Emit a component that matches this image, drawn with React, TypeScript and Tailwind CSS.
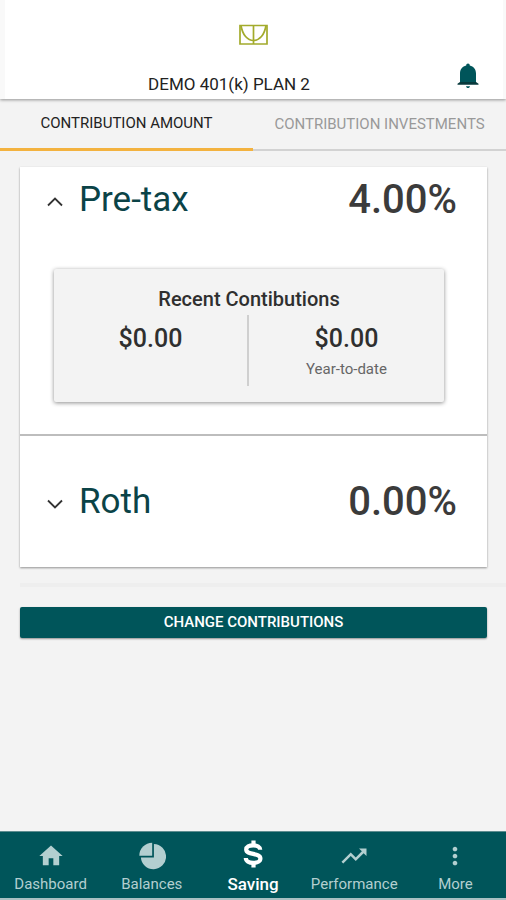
import { useState } from "react";
import type { ReactNode } from "react";
import { MdHome, MdMoreVert, MdTrendingUp } from "react-icons/md";

interface ContributionProps {
  label: string;
  rate: string;
  open?: boolean;
  className: string;
  children?: ReactNode;
}

interface NavItemProps {
  label: string;
  icon: ReactNode;
  active?: boolean;
}

function PlanLogo() {
  return (
    <svg
      className="h-[22px] w-[30px]"
      viewBox="0 0 30 22"
      fill="none"
      stroke="#a3ab2c"
      strokeWidth="1.7"
    >
      <path d="M1 1.5h27v18.5H1zM14.500 1.5V20" />
      <path d="M2 1.5C3.500 11 8.500 16.5 14.500 16.5S25.500 11 27 1.5" />
    </svg>
  );
}

function BellIcon() {
  return (
    <svg className="h-[26px] w-[22px]" viewBox="0 0 22 26" fill="#00555a">
      <path d="M11 0.5c1.1 0 1.8 0.8 1.8 1.9 3.7 0.9 6.2 3.8 6.2 8V20H3V10.4c0-4.2 2.5-7.1 6.2-8 0-1.1.7-1.9 1.8-1.9z" />
      <path d="M3 19h16l2.5 1.7v1H.5v-1z" fill="#07393c" />
      <path d="M9 23.2h4c-.2 1.2-1 1.8-2 1.8s-1.8-.6-2-1.8z" />
    </svg>
  );
}

function ChevronIcon({ open }: { open: boolean }) {
  return (
    <svg
      className="mt-1 h-[10px] w-4"
      viewBox="0 0 16 10"
      fill="none"
      stroke="#333"
      strokeWidth="1.8"
    >
      <path d={open ? "M1 8.5l7-7 7 7" : "M1 1.5l7 7 7-7"} />
    </svg>
  );
}

function PieIcon() {
  return (
    <svg className="h-7 w-7" viewBox="0 0 28 28" fill="currentColor">
      <path d="M15.900 2A12.600 12.600 0 1 1 2.900 15.400H15.900z" />
      <path d="M14.200 .8v12.900H1.300A12.900 12.900 0 0 1 14.200 .8z" />
    </svg>
  );
}

function DollarIcon() {
  return (
    <svg
      className="mb-1 h-7 w-5"
      viewBox="0 0 20 28"
      fill="none"
      stroke="currentColor"
      strokeWidth="4.2"
    >
      <path d="M17.200 9.800C17.200 7 14.200 5.300 10.200 5.300S3.200 6.900 3.200 9.500c0 6 14.200 2.800 14.200 9 0 2.900-3.200 4.400-7.200 4.400s-7.400-1.800-7.400-4.800" />
      <path d="M10.500 .5v4.500M10.500 23v4.500" />
    </svg>
  );
}

function Contribution({
  label,
  rate,
  open = false,
  className,
  children,
}: ContributionProps) {
  return (
    <section className={className}>
      <button
        aria-expanded={open}
        className="flex w-full items-center pr-[30px] pl-[27px]"
      >
        <ChevronIcon open={open} />
        <span className="ml-4 text-[35px] leading-[48px] text-[#0b4347]">
          {label}
        </span>
        <span className="ml-auto text-[40px] leading-[48px] font-medium text-[#3b3b3b]">
          {rate}
        </span>
      </button>
      {children}
    </section>
  );
}

function NavItem({ label, icon, active = false }: NavItemProps) {
  return (
    <a
      href="#"
      aria-current={active ? "page" : undefined}
      className={
        active
          ? "flex flex-1 flex-col items-center text-[17px] font-medium text-white"
          : "flex flex-1 flex-col items-center text-[15px] text-[#b3cfd0]"
      }
    >
      <span className="flex h-7 items-center">{icon}</span>
      <span className="mt-1 leading-5">{label}</span>
    </a>
  );
}

export default function App() {
  const [tab, setTab] = useState("amount");

  const tabs = [
    { id: "amount", label: "CONTRIBUTION AMOUNT" },
    { id: "investments", label: "CONTRIBUTION INVESTMENTS" },
  ];

  return (
    <div className="flex min-h-screen flex-col bg-[#f3f3f3] font-[Roboto,sans-serif] text-[#2f2f2f]">
      <header className="relative bg-[#f9f9f9] pr-[3px] pl-[5px] shadow-[0_1px_3px_rgba(0,0,0,0.4)]">
        <div className="flex flex-col items-center bg-white pt-6 pb-[5px]">
          <PlanLogo />
          <div className="mt-4 grid w-full grid-cols-[1fr_auto_1fr] items-center">
            <h1 className="col-start-2 pt-3 pr-[50px] text-[17px] leading-5 text-[#222]">
              DEMO 401(k) PLAN 2
            </h1>
            <button
              aria-label="Notifications"
              className="mr-6 mb-1 justify-self-end"
            >
              <BellIcon />
            </button>
          </div>
        </div>
      </header>

      <div role="tablist" className="flex h-[52px]">
        {tabs.map((t) => (
          <button
            key={t.id}
            role="tab"
            aria-selected={tab === t.id}
            onClick={() => setTab(t.id)}
            className={
              tab === t.id
                ? "flex-1 border-b-3 border-[#f3b23f] text-[15px] whitespace-nowrap text-[#222]"
                : "flex-1 border-b-2 border-[#d2d2d2] text-[15px] whitespace-nowrap text-[#999]"
            }
          >
            {t.label}
          </button>
        ))}
      </div>

      <main className="flex-1 pt-4 pb-6 pl-5">
        <div className="mr-[19px] bg-white shadow-[0_1px_2px_rgba(0,0,0,0.4)]">
          <Contribution
            label="Pre-tax"
            rate="4.00%"
            open
            className="border-b-2 border-[#bdbdbd] pt-[9px] pb-8"
          >
            <div className="mt-[45px] mr-[43px] ml-[34px] rounded-xs bg-[#f3f3f3] pt-5 pb-4 shadow-[0_1px_4px_rgba(0,0,0,0.45)]">
              <h2 className="text-center text-xl leading-5 font-medium">
                Recent Contibutions
              </h2>
              <div className="mt-[6px] grid grid-cols-2 text-center">
                <div className="h-[71px] border-r-2 border-[#cfcfcf] pt-2">
                  <p className="text-[25px] leading-8 font-medium">$0.00</p>
                </div>
                <div className="pt-2">
                  <p className="text-[25px] leading-8 font-medium">$0.00</p>
                  <p className="mt-1 text-[15px] leading-5 text-[#666]">
                    Year-to-date
                  </p>
                </div>
              </div>
            </div>
          </Contribution>
          <Contribution
            label="Roth"
            rate="0.00%"
            className="pt-[42px] pb-[41px]"
          />
        </div>

        <hr className="mt-4 border-t-4 border-[#eeeeee]" />

        <div className="mt-5 mr-[19px]">
          <button className="h-[31px] w-full rounded-xs bg-[#00555a] text-[15px] font-medium text-white shadow-[0_1px_2px_rgba(0,0,0,0.4)]">
            CHANGE CONTRIBUTIONS
          </button>
        </div>
      </main>

      <nav className="flex border-t border-b-2 border-t-[#5e8c8f] border-b-[#a9c0c2] bg-[#00555a] pt-[10px] pb-1">
        <NavItem label="Dashboard" icon={<MdHome className="size-7" />} />
        <NavItem label="Balances" icon={<PieIcon />} />
        <NavItem label="Saving" icon={<DollarIcon />} active />
        <NavItem
          label="Performance"
          icon={<MdTrendingUp className="size-[30px]" />}
        />
        <NavItem label="More" icon={<MdMoreVert className="size-7" />} />
      </nav>
    </div>
  );
}
